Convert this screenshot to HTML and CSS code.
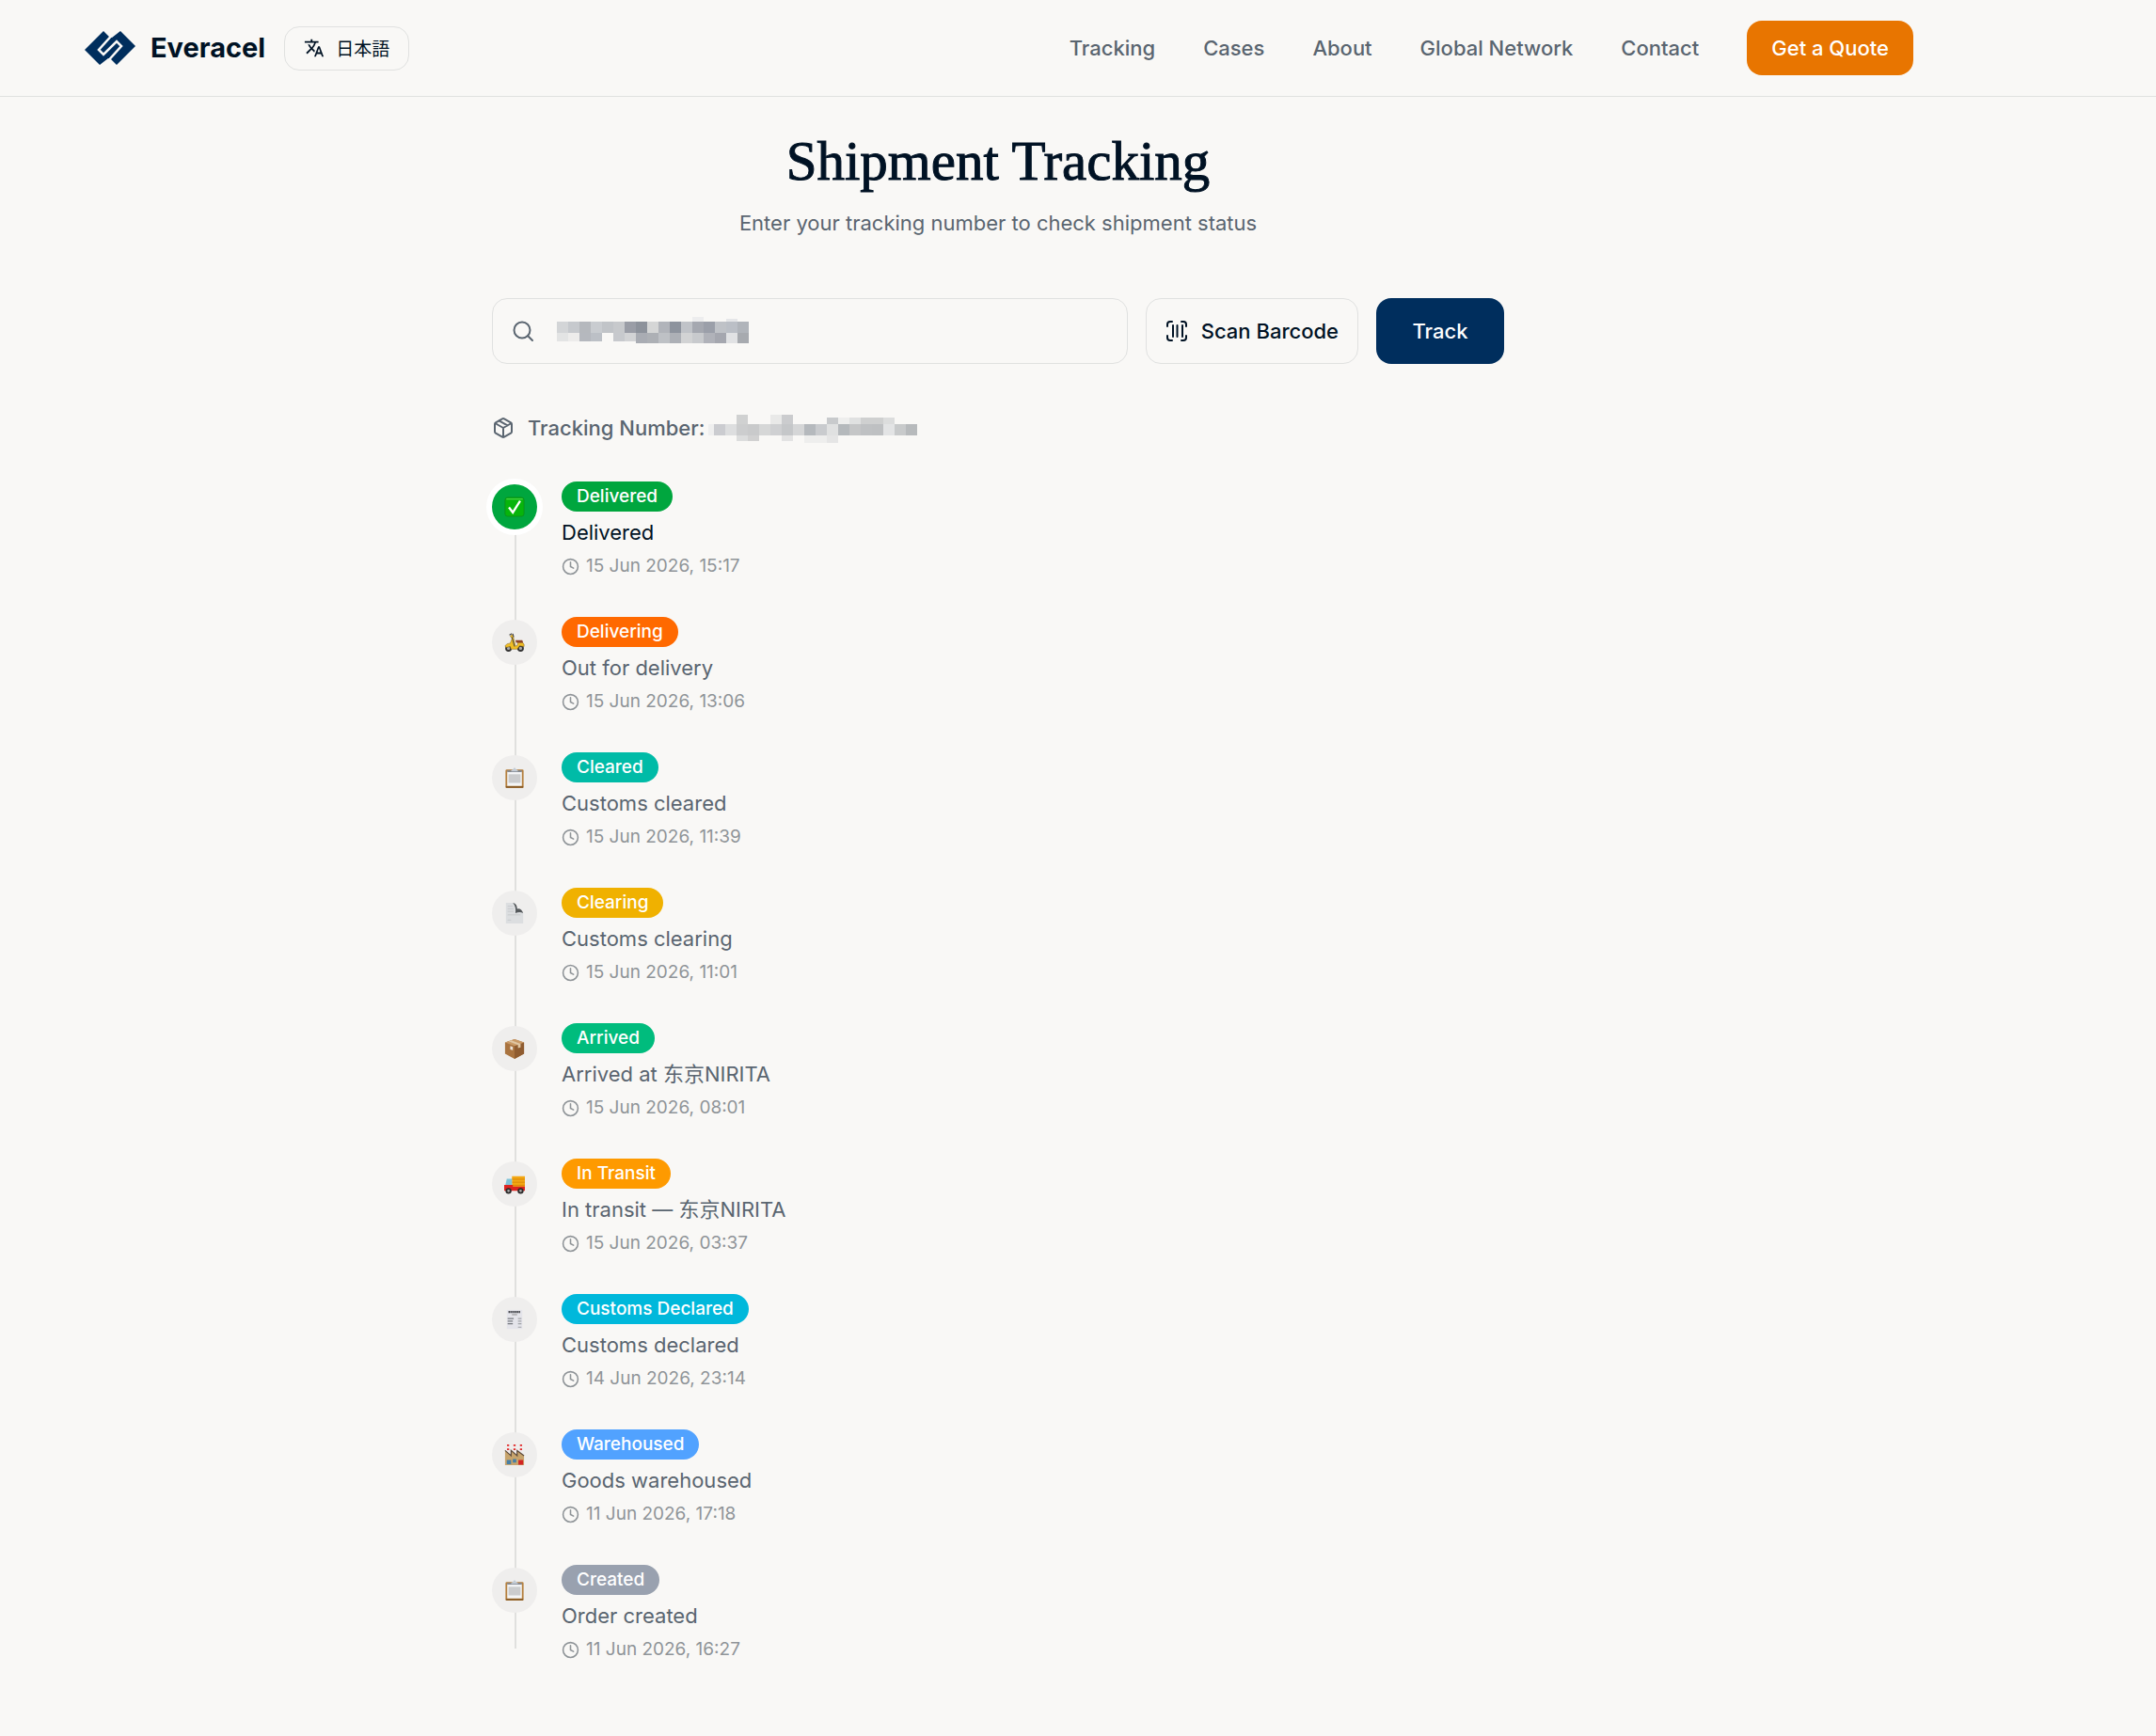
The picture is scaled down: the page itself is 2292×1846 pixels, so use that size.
FILE: index.html
```html
<!DOCTYPE html>
<html lang="en">
  <head>
    <meta charset="UTF-8" />
    <meta name="viewport" content="width=device-width, initial-scale=1.0" />
    <title>Shipment Tracking | Everacel</title>
    <link rel="stylesheet" href="styles.css" />
  </head>
  <body>
    <svg class="sprite" aria-hidden="true">
      <symbol id="clock" viewBox="0 0 24 24">
        <circle cx="12" cy="12" r="10" />
        <path d="M12 6v6l4 2" />
      </symbol>
      <symbol id="clipboard" viewBox="0 0 24 24">
        <rect x="1.500" y="2.500" width="21" height="21.500" rx="1.500" fill="#b5803f" />
        <path d="M2 22h20v1.500H2z" fill="#7d5424" />
        <path d="M3.500 4.500h17v17h-17z" fill="#f4f5f7" />
        <path d="M5 8h14v10H5z" fill="#cbccce" />
        <path d="M3.500 3.500h17v2h-17z" fill="#858a92" />
        <path d="M8 4.500c0-2 2-1.500 2.500-2.500S11 .5 12 .5 13 1 13.500 2 16 2.500 16 4.500z" fill="#c3ccd6" />
      </symbol>
    </svg>

    <header class="header">
      <div class="header__inner">
        <div class="brand">
          <a class="brand__link" href="#">
            <svg class="brand__logo" viewBox="0 0 54 36" aria-hidden="true">
              <path fill="#002e5d" d="M0 20 20 0l6 6 3 1 9-7 16 16-20 20-6-6-3-1-9 7z" />
              <path fill="none" stroke="#f9f8f6" stroke-width="2.500" d="M33 0 15 20l5 5 14-14 5 5-18 20" />
            </svg>
            <span>Everacel</span>
          </a>
          <button class="lang" type="button">
            <svg class="lang__icon" viewBox="0 0 24 24" aria-hidden="true">
              <path fill="currentColor" d="m12.870 15.070-2.540-2.510.030-.030A17.500 17.500 0 0 0 14.070 6H17V4h-7V2H8v2H1v2h11.170C11.500 7.920 10.440 9.750 9 11.350 8.070 10.320 7.300 9.190 6.690 8h-2c.73 1.630 1.730 3.170 2.980 4.560l-5.090 5.020L4 19l5-5 3.110 3.110zM18.500 10h-2L12 22h2l1.120-3h4.750L21 22h2zm-2.620 7 1.620-4.330L19.120 17z" />
            </svg>
            <span lang="ja">日本語</span>
          </button>
        </div>
        <nav class="nav">
          <a href="#">Tracking</a>
          <a href="#">Cases</a>
          <a href="#">About</a>
          <a href="#">Global Network</a>
          <a href="#">Contact</a>
          <a class="nav__cta" href="#">Get a Quote</a>
        </nav>
      </div>
    </header>

    <main class="page">
      <div class="tracking">
        <h1>Shipment Tracking</h1>
        <p class="tracking__intro">Enter your tracking number to check shipment status</p>

        <form class="search" id="search">
          <div class="search__field">
            <svg class="icon" viewBox="0 0 24 24" aria-hidden="true">
              <circle cx="11" cy="11" r="8.500" />
              <path d="m22 22-4.800-4.800" />
            </svg>
            <svg class="mask" id="mask_field" width="208" height="30" aria-hidden="true"></svg>
            <input type="text" aria-label="Tracking number" />
          </div>
          <button class="btn btn--outline" type="button">
            <svg class="icon" viewBox="0 0 24 24" aria-hidden="true">
              <path d="M2 7V5a3 3 0 0 1 3-3h2M17 2h2a3 3 0 0 1 3 3v2M22 17v2a3 3 0 0 1-3 3h-2M7 22H5a3 3 0 0 1-3-3v-2M8 6v12M12.500 6v12M18 6v12" />
            </svg>
            Scan Barcode
          </button>
          <button class="btn btn--primary" type="submit">Track</button>
        </form>

        <div class="number">
          <svg class="icon" viewBox="0 0 24 24" aria-hidden="true">
            <path d="M11 21.730a2 2 0 0 0 2 0l7-4A2 2 0 0 0 21 16V8a2 2 0 0 0-1-1.730l-7-4a2 2 0 0 0-2 0l-7 4A2 2 0 0 0 3 8v8a2 2 0 0 0 1 1.730zM12 22V12M3.290 7 12 12l8.710-5M7.500 4.270l9 5.150" />
          </svg>
          <span>Tracking Number:</span>
          <svg class="mask" id="mask_number" width="222" height="32" aria-hidden="true"></svg>
        </div>

        <ol class="timeline">
          <li class="event event--current">
            <span class="event__dot">
              <svg viewBox="0 0 24 24" aria-hidden="true">
                <rect x="1" y="1" width="22" height="22" rx="3" fill="#07b50b" stroke="#0b8f1c" />
                <path d="M2.500 3h19" stroke="#62db5b" />
                <path d="M5.500 12.500 10 18.500 18.500 5" fill="none" stroke="#fff" stroke-width="2.500" />
              </svg>
            </span>
            <div class="event__body">
              <span class="badge badge--delivered">Delivered</span>
              <p>Delivered</p>
              <time><svg><use href="#clock" /></svg>15 Jun 2026, 15:17</time>
            </div>
          </li>
          <li class="event">
            <span class="event__dot">
              <svg viewBox="0 0 24 24" aria-hidden="true">
                <circle cx="5" cy="19" r="2.800" fill="#aaa" stroke="#333" stroke-width="2" />
                <circle cx="19" cy="19" r="2.800" fill="#aaa" stroke="#333" stroke-width="2" />
                <path d="M7 4.500 10 3l3 13h2l1-4h5q3 2 2 5l-5-1-3 4H8l-1-3-5 1-1-2q2-3 6-3L9 8z" fill="#efbd25" stroke="#77591a" stroke-width=".5" />
                <path d="M9 6l3 11" stroke="#3c3c3c" />
                <path d="M13 9.500h8l1 3h-8z" fill="#8d4429" />
                <path d="M6 3.500 9 2M10 2l1 4" stroke="#444" stroke-width="1.200" />
              </svg>
            </span>
            <div class="event__body">
              <span class="badge badge--delivering">Delivering</span>
              <p>Out for delivery</p>
              <time><svg><use href="#clock" /></svg>15 Jun 2026, 13:06</time>
            </div>
          </li>
          <li class="event">
            <span class="event__dot"><svg><use href="#clipboard" /></svg></span>
            <div class="event__body">
              <span class="badge badge--cleared">Cleared</span>
              <p>Customs cleared</p>
              <time><svg><use href="#clock" /></svg>15 Jun 2026, 11:39</time>
            </div>
          </li>
          <li class="event">
            <span class="event__dot">
              <svg viewBox="0 0 24 24" aria-hidden="true">
                <path d="M2 0h10l4 7 6 5v12H2z" fill="#dcdee0" />
                <path d="M10 0q5 1 5 7 5-1 7 5-4-2-9 0 1-8-3-12" fill="#55595c" />
                <path d="M4 4h6M4 7h7M4 10h7M4 14h15M4 20h4" stroke="#c0c2c5" stroke-width=".8" />
              </svg>
            </span>
            <div class="event__body">
              <span class="badge badge--clearing">Clearing</span>
              <p>Customs clearing</p>
              <time><svg><use href="#clock" /></svg>15 Jun 2026, 11:01</time>
            </div>
          </li>
          <li class="event">
            <span class="event__dot">
              <svg viewBox="0 0 24 24" aria-hidden="true">
                <path d="m12 1 11 4v13l-11 6L1 18V5z" fill="#a9733f" />
                <path d="M12 9 23 5v13l-11 6z" fill="#8f5c30" />
                <path d="m12 1 11 4-11 4L1 5z" fill="#c99a67" />
                <path d="m5 3.500 3-1 11 4v4l-3 1V7.800z" fill="#e0c7a4" />
                <path d="m7 9 3 1v4l-3-1z" fill="#ece5dc" />
              </svg>
            </span>
            <div class="event__body">
              <span class="badge badge--arrived">Arrived</span>
              <p>Arrived at 东京NIRITA</p>
              <time><svg><use href="#clock" /></svg>15 Jun 2026, 08:01</time>
            </div>
          </li>
          <li class="event">
            <span class="event__dot">
              <svg viewBox="0 0 24 24" aria-hidden="true">
                <path d="M9 3h15v14H9z" fill="#f3a712" />
                <path d="M9 6.500h15M9 10h15M9 13.500h15" stroke="#d98508" />
                <path d="M3 6h6v9H1z" fill="#7fc3d8" />
                <path d="M0 13h10v2h14v5H0z" fill="#dc2320" />
                <circle cx="5" cy="20" r="2.500" fill="#aaa" stroke="#2b2b2b" stroke-width="2" />
                <circle cx="19" cy="20" r="2.500" fill="#aaa" stroke="#2b2b2b" stroke-width="2" />
              </svg>
            </span>
            <div class="event__body">
              <span class="badge badge--transit">In Transit</span>
              <p>In transit — 东京NIRITA</p>
              <time><svg><use href="#clock" /></svg>15 Jun 2026, 03:37</time>
            </div>
          </li>
          <li class="event">
            <span class="event__dot">
              <svg viewBox="0 0 24 24" aria-hidden="true">
                <path d="M3 1h18v22H3z" fill="#e4e4ea" />
                <path d="M5 3.500h14" stroke="#44464c" stroke-width="2.500" stroke-dasharray="1.500 .5" />
                <path d="M9 6.500h6" stroke="#888" />
                <path d="M4 11h7M4 14h6M4 17h6" stroke="#777a80" stroke-width="1.300" />
                <path d="M16 11h4M16 14h4M16 17h4M16 21h4" stroke="#a1a3a8" stroke-width="1.200" />
              </svg>
            </span>
            <div class="event__body">
              <span class="badge badge--declared">Customs Declared</span>
              <p>Customs declared</p>
              <time><svg><use href="#clock" /></svg>14 Jun 2026, 23:14</time>
            </div>
          </li>
          <li class="event">
            <span class="event__dot">
              <svg viewBox="0 0 24 24" aria-hidden="true">
                <path d="M4.500 0v9M12 0v9M19.500 0v9" stroke="#f1eaea" stroke-width="2.500" />
                <path d="M4.500 0v9M12 0v9M19.500 0v9" stroke="#e02a2a" stroke-width="2.500" stroke-dasharray="2 2.500" />
                <path d="m1 7 7 6V7l7 6V7l8 6v11H1z" fill="#c7a46c" />
                <path d="m1 7 7 6V7l7 6V7l8 6" fill="none" stroke="#5d4a3b" stroke-width="1.300" />
                <path d="M3 18h5v5H3zM10 17h4v4h-4z" fill="#477fa5" />
                <path d="M16.500 18h5.500v5.500h-5.500z" fill="#d22323" />
              </svg>
            </span>
            <div class="event__body">
              <span class="badge badge--warehoused">Warehoused</span>
              <p>Goods warehoused</p>
              <time><svg><use href="#clock" /></svg>11 Jun 2026, 17:18</time>
            </div>
          </li>
          <li class="event">
            <span class="event__dot"><svg><use href="#clipboard" /></svg></span>
            <div class="event__body">
              <span class="badge badge--created">Created</span>
              <p>Order created</p>
              <time><svg><use href="#clock" /></svg>11 Jun 2026, 16:27</time>
            </div>
          </li>
        </ol>
      </div>
    </main>

    <script src="script.js"></script>
  </body>
</html>
```
FILE: styles.css
```css
* {
  margin: 0;
  padding: 0;
  box-sizing: border-box;
}
body {
  font-family: Inter, "Noto Sans CJK SC", sans-serif;
  font-size: 22px;
  line-height: 32px;
  color: #001224;
  background-color: #f9f8f6;
}
a {
  color: inherit;
  text-decoration: none;
}
button {
  font: inherit;
  color: inherit;
  cursor: pointer;
}
.sprite {
  display: none;
}

/* header */
.header {
  border-bottom: 1px solid #e0e1e0;
}
.header__inner {
  display: flex;
  justify-content: space-between;
  align-items: center;
  height: 102px;
  margin-right: 170px;
  padding: 0 88px 0 90px;
}
.brand,
.brand__link {
  display: flex;
  align-items: center;
}
.brand {
  gap: 20px;
}
.brand__link {
  gap: 16px;
  font-size: 29px;
  font-weight: 700;
}
.brand__logo {
  width: 54px;
  height: 36px;
}
.lang {
  display: flex;
  align-items: center;
  gap: 12px;
  height: 47px;
  padding: 0 20px;
  border: 1px solid #e0e1e0;
  border-radius: 16px;
  background: none;
  font-family: "Noto Sans CJK JP", sans-serif;
  font-size: 19px;
  font-weight: 400;
}
.lang__icon {
  width: 22px;
  height: 22px;
}
.nav {
  display: flex;
  align-items: center;
  gap: 51px;
  font-weight: 500;
  color: #5a6570;
}
.nav__cta {
  padding: 13px 26px;
  border-radius: 16px;
  color: #fff;
  background-color: #e87500;
}

/* tracking */
.page {
  margin-right: 170px;
  padding: 36px 24px 72px;
}
.tracking {
  max-width: 1076px;
  margin: 0 auto;
}
h1 {
  font-family: "Liberation Serif", serif;
  font-size: 59px;
  font-weight: 400;
  line-height: 64px;
  text-align: center;
  -webkit-text-stroke: 1px currentColor;
}
.tracking__intro {
  margin-top: 18px;
  text-align: center;
  color: #5a6570;
}
.icon {
  flex: none;
  width: 24px;
  height: 24px;
  fill: none;
  stroke: currentColor;
  stroke-width: 2;
  stroke-linecap: round;
  stroke-linejoin: round;
}
.search {
  display: flex;
  gap: 19px;
  height: 70px;
  margin-top: 64px;
}
.search__field {
  display: flex;
  flex: 1;
  align-items: center;
  padding-left: 20px;
  border: 1px solid #e0e1e0;
  border-radius: 16px;
  color: #5a6570;
}
.search__field input {
  flex: 1;
  min-width: 0;
  height: 100%;
  border: none;
  outline: none;
  background: none;
  font: inherit;
}
.search__field .mask {
  margin-left: 24px;
}
.btn {
  border-radius: 16px;
  font-weight: 500;
}
.btn--outline {
  display: flex;
  align-items: center;
  gap: 14px;
  padding: 0 20px;
  border: 1px solid #e0e1e0;
  background: none;
}
.btn--primary {
  width: 136px;
  border: none;
  color: #fff;
  background-color: #002e5d;
}
.number {
  display: flex;
  align-items: center;
  margin-top: 52px;
  font-weight: 500;
  color: #5a6570;
}
.number span {
  margin: 0 4px 0 14px;
}

/* timeline */
.timeline {
  position: relative;
  margin-top: 41px;
  list-style: none;
}
.timeline::before {
  content: "";
  position: absolute;
  top: 24px;
  bottom: 15px;
  left: 24px;
  width: 2px;
  background-color: #e0e0de;
}
.event {
  display: flex;
  gap: 26px;
}
.event + .event {
  margin-top: 40px;
}
.event__dot {
  position: relative;
  display: flex;
  justify-content: center;
  align-items: center;
  width: 48px;
  height: 48px;
  margin-top: 3px;
  border-radius: 50%;
  background-color: #efeeed;
}
.event__dot svg {
  width: 22px;
  height: 24px;
}
.event--current .event__dot {
  background-color: #00a63e;
  box-shadow: 0 0 0 6px #fff;
}
.badge {
  display: block;
  width: fit-content;
  padding: 0 16px;
  border-radius: 16px;
  font-size: 19px;
  font-weight: 500;
  color: #fff;
}
.event p {
  margin-top: 6px;
  color: #5a6570;
}
.event--current p {
  color: #001224;
}
.event time {
  display: flex;
  align-items: center;
  gap: 7px;
  margin-top: 6px;
  font-size: 19px;
  line-height: 28px;
  color: #8f9498;
}
.event time svg {
  width: 19px;
  height: 19px;
  overflow: visible;
  fill: none;
  stroke: currentColor;
  stroke-width: 2;
  stroke-linecap: round;
}
.badge--delivered {
  background-color: #00a63e;
}
.badge--delivering {
  background-color: #ff6900;
}
.badge--cleared {
  background-color: #00bba7;
}
.badge--clearing {
  background-color: #f0b100;
}
.badge--arrived {
  background-color: #00bc7d;
}
.badge--transit {
  background-color: #fe9a00;
}
.badge--declared {
  background-color: #00b8db;
}
.badge--warehoused {
  background-color: #51a2ff;
}
.badge--created {
  background-color: #99a1af;
}
```
FILE: script.js
```js
const size = 12;

// each row: x offset, y offset, block height, shades (null leaves a gap)
const fieldRows = [
  [0, 5, 12, ["#d3d5d7", "#c6c9cd", "#b5b8bd", "#c9ccd0", "#c1c4c8", "#c7c9cc", "#9a9da6", "#8d929b", "#d5d6d6", "#b1b4ba", "#8d939d", "#c0c3c8", "#a5a8b0", "#9b9fa9", "#bfc2c7", "#bbbfc6", "#b0b4ba"]],
  [0, 17, 9, ["#e3e4e4", "#edeceb", "#b5b8be", "#bcc0c6", null, "#c7c9cd", "#d2d3d5", "#a9acb3", "#adb0b5", "#bec1c5", "#adb0b6", "#d2d3d4", "#c8cacd", "#b0b2b9", "#a5a7af", "#e1e2e4", "#a7aaaf"]],
  [84, 26, 2, ["#a9acb3", "#adb0b5", "#bec1c5", "#adb0b6", "#d2d3d4", "#c8cacd", "#b0b2b9", "#a5a7af", "#e1e2e4", "#a7aaaf"]],
  [144, 0, 5, ["#ededee"]],
  [180, 2, 3, ["#e5e6e8"]],
];

const numberRows = [
  [30, 2, 10, ["#d0d1d1", null, null, "#e9e9e8", "#cbccce"]],
  [126, 5, 7, ["#c8cacc", "#eeeeed", "#e0e1e1", "#cfd0d0", "#cfd0d0", "#dcdddd"]],
  [-6, 12, 12, ["#efefef", "#cbccd0", "#dddedf", "#cccdce", "#c9cacb", "#d6d7d7", "#cfd0d2", "#c5c7c9", "#d5d6d7", "#b5b9bd", "#c9cbce", "#e0e1e1", "#b5b9bc", "#c5c6c7", "#bfc1c3", "#bec0c2", "#e3e4e5", "#c8cacb", "#b7babc"]],
  [30, 24, 6, ["#dcdddd", "#d1d1d1", null, null, "#e3e3e3"]],
  [102, 24, 8, ["#eeeeed", "#eeeeed", "#e5e5e5"]],
];

const drawMask = (id, rows) => {
  const svg = document.getElementById(id);
  rows.forEach(([x, y, height, shades]) => {
    shades.forEach((shade, i) => {
      if (!shade) return;
      const rect = document.createElementNS("http://www.w3.org/2000/svg", "rect");
      rect.setAttribute("x", x + i * size);
      rect.setAttribute("y", y);
      rect.setAttribute("width", size);
      rect.setAttribute("height", height);
      rect.setAttribute("fill", shade);
      svg.appendChild(rect);
    });
  });
};

drawMask("mask_field", fieldRows);
drawMask("mask_number", numberRows);

document.getElementById("search").addEventListener("submit", (e) => {
  e.preventDefault();
});
```
